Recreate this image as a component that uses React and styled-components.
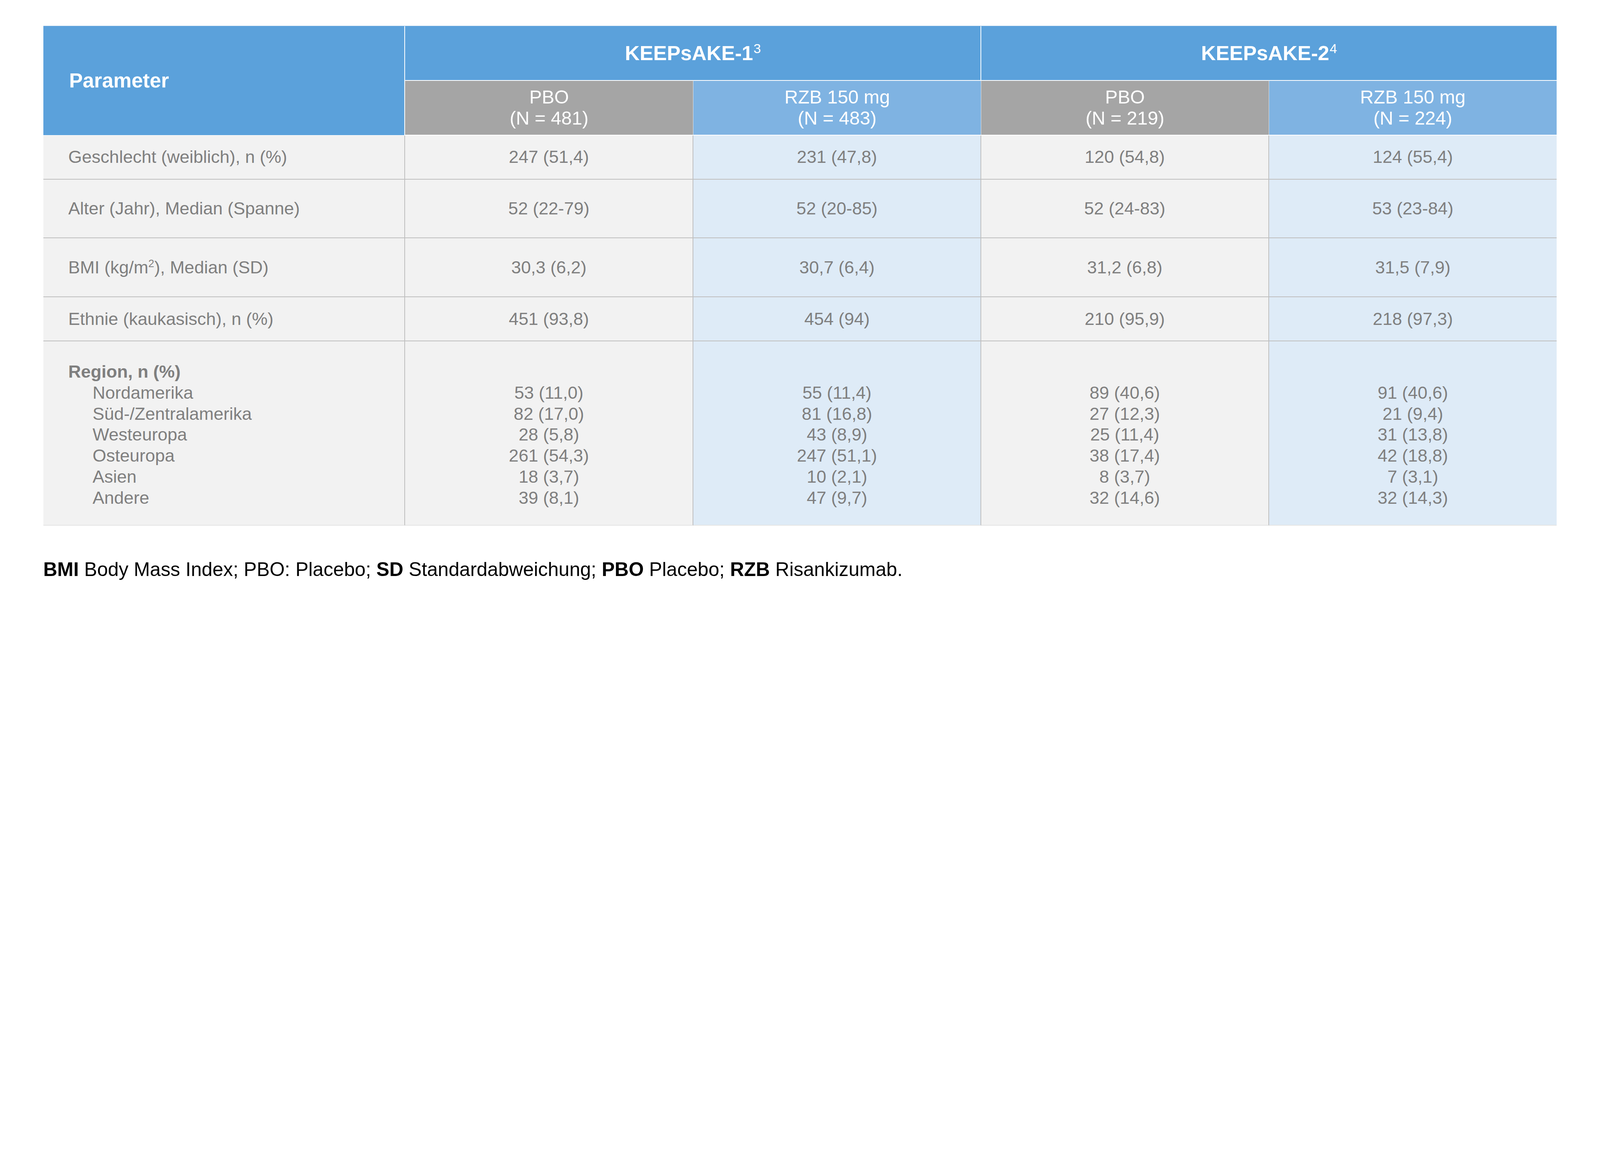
import React from "react"
import styled, { createGlobalStyle } from "styled-components"

const GlobalStyle = createGlobalStyle`
  html, body {
    margin: 0;
    padding: 0;
    background: #ffffff;
    overflow: hidden;
  }
  body {
    font-family: "Liberation Sans", Arial, sans-serif;
  }
`

// the design is measured in screenshot pixels (7917 wide); scaled to the viewport at runtime
const Page = styled.div`
  width: 7917px;
  height: 2996px;
  padding: 128px 0 0 214px;
  box-sizing: border-box;
`

const Grid = styled.div`
  display: grid;
  width: 7489px;
  grid-template-columns: 1791px 1426px 1425px 1423px 1424px;
  grid-template-rows: 266px 274px 219px 290px 292px 219px 911px;
  border-top: 2px solid #8dbce6;
`

const HeadCell = styled.div`
  grid-row: ${(p) => p.$row || "auto"};
  grid-column: ${(p) => p.$col || "auto"};
  display: flex;
  align-items: center;
  justify-content: ${(p) => (p.$left ? "flex-start" : "center")};
  padding-left: ${(p) => (p.$left ? "128px" : "0")};
  background: #5ba1db;
  color: #ffffff;
  font-weight: bold;
  font-size: 101px;
  box-sizing: border-box;
  border-right: ${(p) => (p.$last ? "none" : "4px solid #ffffff")};
  border-bottom: ${(p) => (p.$left ? "2px solid #ffffff" : "none")};

  sup {
    font-size: 0.65em;
    line-height: 0;
    vertical-align: super;
    font-weight: normal;
    margin-left: 2px;
  }
`

const SubHeadCell = styled.div`
  display: flex;
  flex-direction: column;
  align-items: center;
  justify-content: center;
  background: ${(p) => (p.$rzb ? "#7fb3e2" : "#a5a5a5")};
  color: #ffffff;
  font-size: 93px;
  line-height: 104px;
  box-sizing: border-box;
  border-top: 4px solid #ffffff;
  border-bottom: 4px solid #ffffff;
  border-right: ${(p) => (p.$last ? "none" : "2px solid #e3e3e3")};
`

const Cell = styled.div`
  display: flex;
  flex-direction: column;
  justify-content: ${(p) => (p.$region ? "flex-start" : "center")};
  align-items: ${(p) => (p.$label ? "flex-start" : "center")};
  padding-left: ${(p) => (p.$label ? "124px" : "0")};
  padding-top: ${(p) => (p.$region ? "98px" : "0")};
  background: ${(p) => (p.$rzb ? "#deebf7" : "#f2f2f2")};
  color: #7f7f7f;
  font-size: 87px;
  line-height: 104px;
  box-sizing: border-box;
  border-right: ${(p) => (p.$last ? "none" : "4px solid #bfbfbf")};
  border-bottom: 4px solid ${(p) => (p.$region ? "#e4e4e4" : "#bfbfbf")};

  sup {
    font-size: 0.6em;
    line-height: 0;
    vertical-align: super;
  }
`

const RegionTitle = styled.div`
  font-weight: bold;
`

const Line = styled.div`
  padding-left: ${(p) => (p.$indent ? "120px" : "0")};
  min-height: 104px;
  white-space: nowrap;
`

const Footnote = styled.p`
  margin: 163px 0 0 0;
  font-size: 96px;
  line-height: 1.15;
  color: #000000;
  white-space: nowrap;
`

const arms = [
  { name: "PBO", n: 481, rzb: false },
  { name: "RZB 150 mg", n: 483, rzb: true },
  { name: "PBO", n: 219, rzb: false },
  { name: "RZB 150 mg", n: 224, rzb: true },
]

const rows = [
  { label: "Geschlecht (weiblich), n (%)", values: ["247 (51,4)", "231 (47,8)", "120 (54,8)", "124 (55,4)"] },
  { label: "Alter (Jahr), Median (Spanne)", values: ["52 (22-79)", "52 (20-85)", "52 (24-83)", "53 (23-84)"] },
  {
    label: (
      <>
        BMI (kg/m<sup>2</sup>), Median (SD)
      </>
    ),
    values: ["30,3 (6,2)", "30,7 (6,4)", "31,2 (6,8)", "31,5 (7,9)"],
  },
  { label: "Ethnie (kaukasisch), n (%)", values: ["451 (93,8)", "454 (94)", "210 (95,9)", "218 (97,3)"] },
]

const regions = [
  { name: "Nordamerika", values: ["53 (11,0)", "55 (11,4)", "89 (40,6)", "91 (40,6)"] },
  { name: "Süd-/Zentralamerika", values: ["82 (17,0)", "81 (16,8)", "27 (12,3)", "21 (9,4)"] },
  { name: "Westeuropa", values: ["28 (5,8)", "43 (8,9)", "25 (11,4)", "31 (13,8)"] },
  { name: "Osteuropa", values: ["261 (54,3)", "247 (51,1)", "38 (17,4)", "42 (18,8)"] },
  { name: "Asien", values: ["18 (3,7)", "10 (2,1)", "8 (3,7)", "7 (3,1)"] },
  { name: "Andere", values: ["39 (8,1)", "47 (9,7)", "32 (14,6)", "32 (14,3)"] },
]

const App = () => {
  const scale = typeof window !== "undefined" ? window.innerWidth / 7917 : 1

  return (
    <>
      <GlobalStyle />
      <Page style={{ zoom: scale }}>
        <Grid>
          <HeadCell $row="1 / span 2" $col="1" $left>
            Parameter
          </HeadCell>
          <HeadCell $row="1" $col="2 / span 2">
            <span>
              KEEPsAKE-1<sup>3</sup>
            </span>
          </HeadCell>
          <HeadCell $row="1" $col="4 / span 2" $last>
            <span>
              KEEPsAKE-2<sup>4</sup>
            </span>
          </HeadCell>

          {arms.map((a, i) => (
            <SubHeadCell key={i} $rzb={a.rzb} $last={i === arms.length - 1}>
              <div>{a.name}</div>
              <div>(N = {a.n})</div>
            </SubHeadCell>
          ))}

          {rows.map((r, ri) => (
            <React.Fragment key={ri}>
              <Cell $label>
                <span>{r.label}</span>
              </Cell>
              {r.values.map((v, i) => (
                <Cell key={i} $rzb={i % 2 === 1} $last={i === 3}>
                  {v}
                </Cell>
              ))}
            </React.Fragment>
          ))}

          <Cell $label $region>
            <RegionTitle>Region, n (%)</RegionTitle>
            {regions.map((g) => (
              <Line key={g.name} $indent>
                {g.name}
              </Line>
            ))}
          </Cell>
          {[0, 1, 2, 3].map((i) => (
            <Cell key={i} $region $rzb={i % 2 === 1} $last={i === 3}>
              <Line />
              {regions.map((g) => (
                <Line key={g.name}>{g.values[i]}</Line>
              ))}
            </Cell>
          ))}
        </Grid>

        <Footnote>
          <b>BMI</b> Body Mass Index; PBO: Placebo; <b>SD</b> Standardabweichung; <b>PBO</b> Placebo;{" "}
          <b>RZB</b> Risankizumab.
        </Footnote>
      </Page>
    </>
  )
}

export default App
